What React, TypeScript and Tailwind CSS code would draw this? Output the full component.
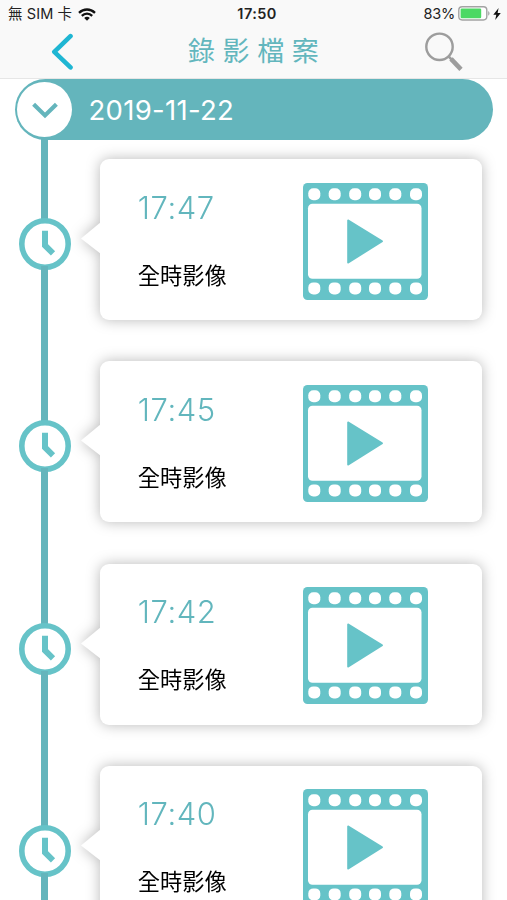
const recordings = [
  { time: '17:47', label: '全時影像' },
  { time: '17:45', label: '全時影像' },
  { time: '17:42', label: '全時影像' },
  { time: '17:40', label: '全時影像' },
];

const holes = [11.3, 31.7, 52.2, 72, 92.3, 113];

const StatusBar = () => (
  <div className="grid h-7 grid-cols-3 items-center text-[14.5px] text-[#222] font-['Inter','Noto_Sans_CJK_TC',sans-serif]">
    <div className="flex items-center pl-2 whitespace-nowrap">
      <span className="tracking-[0.1px]">無 SIM 卡</span>
      <svg className="ml-1.5 h-[13px] w-[18px]" viewBox="0 0 18 13" fill="none" stroke="#111" strokeWidth="2.3">
        <path d="M1 4.8c4.6-4.4 11.4-4.4 16 0" />
        <path d="M3.8 7.8c3-2.9 7.4-2.9 10.4 0" />
        <path d="M9 12.7 6.2 9.9c1.6-1.5 4-1.5 5.6 0Z" fill="#111" stroke="none" />
      </svg>
    </div>
    <div className="pl-[7px] text-center font-semibold tracking-[0.4px]">17:50</div>
    <div className="flex items-center justify-end pr-[6px]">
      <span className="tracking-[-0.2px]">83%</span>
      <svg className="-mt-px ml-[3px] h-[15px] w-8" viewBox="0 0 32 15">
        <rect x="0.8" y="0.8" width="28" height="13.2" rx="3.4" fill="#fff" stroke="#a3a3a3" strokeWidth="1.4" />
        <rect x="2.6" y="2.6" width="20.6" height="9.6" rx="1.2" fill="#4cd964" />
        <path d="M30.2 5c1.8.8 1.8 4 0 4.8Z" fill="#a3a3a3" />
      </svg>
      <svg className="-mt-px ml-[3px] h-3 w-2" viewBox="0 0 8 12">
        <path d="M5.6 0 .3 6.7h3L2.2 12 7.8 4.9H4.6Z" fill="#111" />
      </svg>
    </div>
  </div>
);

const ClockIcon = () => (
  <svg className="h-[52px] w-[52px] shrink-0" viewBox="0 0 52 52" fill="none" stroke="#66c3c8">
    <circle cx="26" cy="26" r="23.2" fill="#fff" strokeWidth="5.6" />
    <path d="M26 12.8v14.6l8 7.9" strokeWidth="6" />
  </svg>
);

const FilmIcon = () => (
  <svg className="h-[117px] w-[125px]" viewBox="0 0 125 117">
    <rect width="125" height="117" rx="4.5" fill="#66c3c8" />
    {holes.map((x) => (
      <g key={x} fill="#fff">
        <rect x={x - 6} y="5.2" width="12" height="12" rx="5" />
        <rect x={x - 6} y="99.4" width="12" height="12" rx="5" />
      </g>
    ))}
    <rect x="5" y="20.8" width="113.5" height="75" rx="4.5" fill="#fff" />
    <path d="M45 37.3v42.4L79.2 58.3Z" fill="#66c3c8" stroke="#66c3c8" strokeWidth="1.6" strokeLinejoin="round" />
  </svg>
);

const RecordingRow = ({ time, label }: { time: string; label: string }) => (
  <li className="flex h-[202.3px] shrink-0">
    <div className="ml-[18.7px] flex w-[52px] flex-col items-center">
      <div className="h-[83px] w-[7px] bg-[#64b5bc]" />
      <div className="-my-1 flex">
        <ClockIcon />
      </div>
      <div className="w-[7px] flex-1 bg-[#64b5bc]" />
    </div>
    <div className="ml-[10px] mt-5 flex h-[161px] drop-shadow-[0_0_7px_rgba(0,0,0,0.28)]">
      <svg className="mt-[62px] h-[34px] w-5" viewBox="0 0 20 34">
        <path d="M20 1v32L0 17.5Z" fill="#fff" />
      </svg>
      <div className="-ml-px flex w-[382px] rounded-[9px] bg-white pl-[38px]">
        <div className="w-[165px]">
          <div className="mt-[25.5px] h-[46px] text-[31px] leading-[46px] font-[350] tracking-[0.6px] text-[#62b6bd] font-['Inter',sans-serif]">
            {time}
          </div>
          <div className="mt-[27px] text-[22.3px] leading-[32px] text-black font-['Noto_Sans_CJK_TC',sans-serif]">
            {label}
          </div>
        </div>
        <div className="mt-[23.5px]">
          <FilmIcon />
        </div>
      </div>
    </div>
  </li>
);

export default function App() {
  return (
    <div className="flex h-[900px] w-[507px] flex-col overflow-hidden bg-white">
      <header className="h-[79px] shrink-0 border-b border-[#e6e6e6] bg-[#f9f9f9]">
        <StatusBar />
        <div className="flex h-[44px] items-center">
          <svg className="ml-[50px] h-10 w-6" viewBox="0 0 24 40" fill="none" stroke="#1fb6d3" strokeWidth="4.6" strokeLinecap="round" strokeLinejoin="round">
            <path d="M20.5 6.2 4.3 21.8l16.2 15.6" />
          </svg>
          <h1 className="ml-[114px] w-[235px] whitespace-nowrap text-[27px] leading-[40px] tracking-[7.6px] text-[#62b6bd] font-['Noto_Sans_CJK_TC',sans-serif]">
            錄影檔案
          </h1>
          <svg className="mt-1 h-10 w-10" viewBox="0 0 40 40" fill="none" stroke="#9d9d9d">
            <circle cx="16.5" cy="14.8" r="13.2" strokeWidth="2.4" />
            <path d="m25.5 24.4 4 4" strokeWidth="2.6" />
            <path d="m28 26.9 10 10.4" strokeWidth="4.6" />
          </svg>
        </div>
      </header>

      <main className="flex flex-col">
        <div className="ml-[15px] flex h-[60.5px] w-[478px] shrink-0 items-center rounded-full bg-[#64b5bc] pl-[2px]">
          <div className="flex h-[55px] w-[55px] items-center justify-center rounded-full bg-white">
            <svg className="mt-px h-[18px] w-[26px]" viewBox="0 0 26 18" fill="none" stroke="#64b5bc" strokeWidth="4.2">
              <path d="M1.6 3.2 13 14.4 24.4 3.2" />
            </svg>
          </div>
          <span className="ml-[16.5px] mt-[3px] text-[27.5px] font-normal tracking-[0.3px] text-white font-['Inter',sans-serif]">
            2019-11-22
          </span>
        </div>

        <ul className="-mt-[0.5px] flex flex-col">
          {recordings.map((rec) => (
            <RecordingRow key={rec.time} time={rec.time} label={rec.label} />
          ))}
        </ul>
      </main>
    </div>
  );
}
